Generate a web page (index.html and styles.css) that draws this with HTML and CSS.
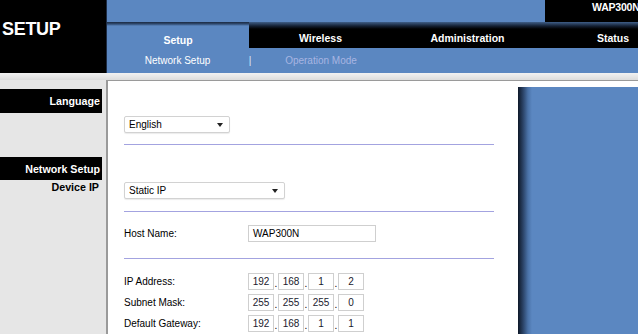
FILE: index.html
```html
<!DOCTYPE html>
<html lang="en">
  <head>
    <meta charset="UTF-8" />
    <title>WAP300N Setup</title>
    <meta name="viewport" content="width=device-width, initial-scale=1" />
    <link rel="stylesheet" href="styles.css">
  </head>

  <body>
    <!-- Header -->
    <div class="header">
      <div class="brand">SETUP</div>
      <div class="header-main">
        <div class="topbar">
          <div class="topbar-fill"></div>
          <div class="model">WAP300N</div>
        </div>
        <div class="tabs">
          <div class="tab tab-active">Setup</div>
          <div class="tab tab-wireless">Wireless</div>
          <div class="tab tab-admin">Administration</div>
          <div class="tab tab-status">Status</div>
        </div>
        <div class="subnav">
          <div class="sub-item">Network Setup</div>
          <div class="sub-sep">|</div>
          <div class="sub-item sub-dim">Operation Mode</div>
        </div>
      </div>
    </div>

    <div class="strip"></div>

    <!-- Body -->
    <div class="page">
      <div class="sidebar">
        <div class="side-bar side-lang">Language</div>
        <div class="side-bar side-net">Network Setup</div>
        <div class="side-label">Device IP</div>
      </div>

      <div class="content">
        <div class="select select-lang">
          <span>English</span>
          <span class="caret"></span>
        </div>
        <div class="rule rule-1"></div>

        <div class="select select-ip">
          <span>Static IP</span>
          <span class="caret"></span>
        </div>
        <div class="rule rule-2"></div>

        <div class="row row-host">
          <div class="label">Host Name:</div>
          <div class="input input-host">WAP300N</div>
        </div>
        <div class="rule rule-3"></div>

        <div class="ip-rows">
          <div class="row">
            <div class="label">IP Address:</div>
            <div class="ip">
              <div class="octet">192</div><span class="dot">.</span>
              <div class="octet">168</div><span class="dot">.</span>
              <div class="octet">1</div><span class="dot">.</span>
              <div class="octet">2</div>
            </div>
          </div>
          <div class="row">
            <div class="label">Subnet Mask:</div>
            <div class="ip">
              <div class="octet">255</div><span class="dot">.</span>
              <div class="octet">255</div><span class="dot">.</span>
              <div class="octet">255</div><span class="dot">.</span>
              <div class="octet">0</div>
            </div>
          </div>
          <div class="row">
            <div class="label">Default Gateway:</div>
            <div class="ip">
              <div class="octet">192</div><span class="dot">.</span>
              <div class="octet">168</div><span class="dot">.</span>
              <div class="octet">1</div><span class="dot">.</span>
              <div class="octet">1</div>
            </div>
          </div>
        </div>
      </div>

      <div class="right">
        <div class="right-panel"></div>
      </div>
    </div>
  </body>
</html>
```

FILE: styles.css
```css
body {
  font-family: "Liberation Sans", Arial, sans-serif;
  margin: 0;
  width: 638px;
  height: 334px;
  overflow: hidden;
  background-color: #ffffff;
}

/* header */
.header {
  display: flex;
  height: 73px;
}

.brand {
  width: 104px;
  flex: none;
  background-color: #000000;
  color: #ffffff;
  font-size: 18px;
  font-weight: bold;
  padding: 19px 0 0 2px;
  line-height: 20px;
  letter-spacing: -0.3px;
}

.header-main {
  width: 532px;
  flex: none;
  border-left: 1px solid #1d2c44;
  overflow: hidden;
}

.topbar {
  display: flex;
  height: 22px;
}

.topbar-fill {
  width: 438px;
  flex: none;
  background-color: #5b87c1;
}

.model {
  flex: 1;
  background-color: #000000;
  color: #ffffff;
  font-size: 10.5px;
  font-weight: bold;
  padding: 1px 0 0 47px;
  letter-spacing: -0.2px;
  white-space: nowrap;
}

.tabs {
  display: flex;
  height: 26px;
}

.tab {
  flex: none;
  text-align: center;
  color: #ffffff;
  font-size: 10.5px;
  font-weight: bold;
  line-height: 12px;
  padding-top: 10px;
  background: linear-gradient(#3f5e88 0, #142033 4px, #000000 7px);
}

.tab-active {
  width: 142px;
  padding-top: 12px;
  background: linear-gradient(#1a2940 0, #2f4a70 2px, #5b87c1 4px);
}

.tab-wireless {
  width: 143px;
}

.tab-admin {
  width: 151px;
}

.tab-status {
  width: 140px;
}

.subnav {
  display: flex;
  height: 25px;
  background-color: #5b87c1;
  color: #ffffff;
  font-size: 10px;
  line-height: 25px;
}

.sub-item {
  width: 141px;
  text-align: center;
}

.sub-sep {
  width: 4px;
  text-align: center;
  color: #dfe8f6;
}

.sub-dim {
  width: 138px;
  color: #a8b5e2;
}

.strip {
  height: 7px;
  background: linear-gradient(#f2f2f2, #dcdcdc);
}

/* page body */
.page {
  display: flex;
  height: 254px;
}

.sidebar {
  width: 106px;
  flex: none;
  background-color: #e6e6e6;
}

.side-bar {
  width: 100px;
  background-color: #000000;
  color: #ffffff;
  font-size: 10.7px;
  font-weight: bold;
  text-align: right;
  padding-right: 2px;
}

.side-lang {
  margin-top: 9px;
  height: 24px;
  line-height: 24px;
}

.side-net {
  margin-top: 44px;
  height: 23px;
  line-height: 24px;
}

.side-label {
  font-size: 10.7px;
  font-weight: bold;
  text-align: right;
  padding-right: 7px;
  line-height: 14px;
  color: #000000;
}

.content {
  width: 394px;
  flex: none;
  border-left: 2px solid #9a9a9a;
  border-top: 1px solid #9a9a9a;
  padding-left: 16px;
  font-size: 10px;
  color: #000000;
}

.select {
  display: flex;
  align-items: center;
  justify-content: space-between;
  height: 15px;
  border: 1px solid #d2d2d2;
  border-radius: 2px;
  background-color: #ffffff;
  padding: 0 6px 0 4px;
  box-shadow: 0 1px 1px rgba(0, 0, 0, 0.08);
}

.caret {
  width: 0;
  height: 0;
  border-left: 3px solid transparent;
  border-right: 3px solid transparent;
  border-top: 4px solid #222222;
}

.select-lang {
  width: 94px;
  margin-top: 35px;
}

.select-ip {
  width: 149px;
  margin-top: 37px;
}

.rule {
  width: 370px;
  height: 1px;
  background-color: #a3a3e0;
}

.rule-1 {
  margin-top: 11px;
}

.rule-2 {
  margin-top: 12px;
}

.rule-3 {
  margin-top: 14px;
}

.row {
  display: flex;
  align-items: center;
  height: 21px;
}

.row-host {
  margin-top: 11px;
}

.label {
  width: 124px;
}

.input {
  height: 15px;
  line-height: 15px;
  border: 1px solid #cfcfcf;
  background-color: #ffffff;
}

.input-host {
  width: 122px;
  padding-left: 4px;
}

.ip-rows {
  margin-top: 12px;
}

.ip {
  display: flex;
  align-items: flex-end;
}

.octet {
  width: 24px;
  height: 15px;
  line-height: 15px;
  border: 1px solid #cfcfcf;
  text-align: center;
  color: #1a1a2e;
}

.dot {
  width: 4px;
  text-align: center;
  line-height: 12px;
}

.right {
  flex: 1;
  border-top: 1px solid #9a9a9a;
  padding-top: 6px;
}

.right-panel {
  height: 100%;
  background: linear-gradient(to right, #0e1828 0, #2a4266 5px, #4a72a8 10px, #5b87c1 14px);
}
```
